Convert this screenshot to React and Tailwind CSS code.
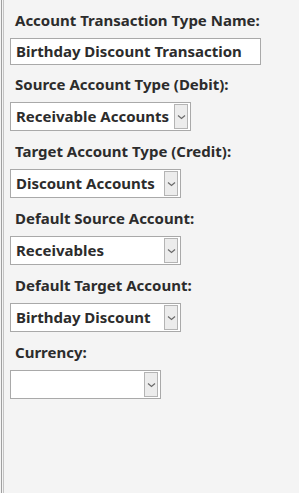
import React from "react";

function Chevron() {
  return (
    <svg width="9" height="6" viewBox="0 0 9 6" fill="none">
      <path d="M1 1.5 L4.5 4.5 L8 1.5" stroke="#6a6a6a" strokeWidth="1.2" />
    </svg>
  );
}

function Label({ children }) {
  return (
    <div className="pl-[5px] text-[15px] font-bold leading-[21px] text-[#2c2c2c]">{children}</div>
  );
}

function Select({ value, width }) {
  return (
    <div
      className={`flex h-[29px] items-center justify-between border border-[#a9a9a9] bg-white pl-[5px] pr-[2px] ${width}`}
    >
      <span className="text-[15px] font-bold text-[#2c2c2c]">{value}</span>
      <div className="flex h-[25px] w-[14px] items-center justify-center border border-[#b4b4b4] bg-[#ececec]">
        <Chevron />
      </div>
    </div>
  );
}

export default function App() {
  return (
    <div
      className="flex h-[493px] w-[299px] bg-[#f4f4f4]"
      style={{ fontFamily: '"Noto Sans", "Open Sans", sans-serif' }}
    >
      <div className="w-[1px] bg-[#f4f4f4]" />
      <div className="w-[1px] bg-[#a0a0a0]" />
      <div className="w-[1px] bg-[#f4f4f4]" />
      <div className="w-[1px] bg-[#c4c4c4]" />
      <div className="flex flex-col pl-[6px] pt-[10px]">
        <Label>Account Transaction Type Name:</Label>
        <div className="mt-[7px] flex h-[27px] w-[251px] items-center border border-[#a9a9a9] bg-white pl-[5px] text-[15px] font-bold text-[#2c2c2c]">
          Birthday Discount Transaction
        </div>
        <div className="mt-[9px]"><Label>Source Account Type (Debit):</Label></div>
        <div className="mt-[7px]"><Select value="Receivable Accounts" width="w-[181px]" /></div>
        <div className="mt-[10px]"><Label>Target Account Type (Credit):</Label></div>
        <div className="mt-[7px]"><Select value="Discount Accounts" width="w-[171px]" /></div>
        <div className="mt-[10px]"><Label>Default Source Account:</Label></div>
        <div className="mt-[7px]"><Select value="Receivables" width="w-[171px]" /></div>
        <div className="mt-[10px]"><Label>Default Target Account:</Label></div>
        <div className="mt-[7px]"><Select value="Birthday Discount" width="w-[171px]" /></div>
        <div className="mt-[10px]"><Label>Currency:</Label></div>
        <div className="mt-[7px]"><Select value="" width="w-[151px]" /></div>
      </div>
    </div>
  );
}
